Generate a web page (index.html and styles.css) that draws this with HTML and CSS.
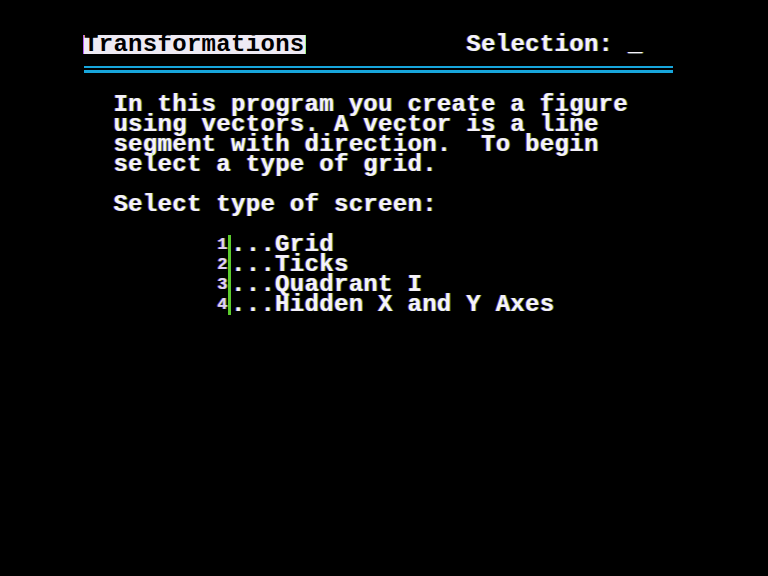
FILE: index.html
```html
<!DOCTYPE html>
<html>
<head>
<meta charset="utf-8">
<link rel="stylesheet" href="styles.css">
</head>
<body>
<div class="screen">
  <div class="row"><span class="inverse">Transformations</span>           Selection: _</div>
  <div class="rule"></div>
  <div class="row">  In this program you create a figure</div>
  <div class="row">  using vectors. A vector is a line</div>
  <div class="row">  segment with direction.  To begin</div>
  <div class="row">  select a type of grid.</div>
  <div class="row"> </div>
  <div class="row">  Select type of screen:</div>
  <div class="row"> </div>
  <div class="row">         <span class="key">1</span>...Grid</div>
  <div class="row">         <span class="key">2</span>...Ticks</div>
  <div class="row">         <span class="key">3</span>...Quadrant I</div>
  <div class="row">         <span class="key">4</span>...Hidden X and Y Axes</div>
</div>
</body>
</html>
```
FILE: styles.css
```css
html, body {
  margin: 0;
  padding: 0;
  background: #000;
  width: 768px;
  height: 576px;
  overflow: hidden;
}
.screen {
  margin-left: 84px;
  padding-top: 35px;
  width: 590px;
  font-family: "Liberation Mono", "DejaVu Sans Mono", monospace;
  font-weight: bold;
  font-size: 24px;
  letter-spacing: 0.3px;
  color: #f6f2fa;
  text-shadow: 1px 0 rgba(110, 240, 70, 0.55), -1px 0 rgba(190, 80, 255, 0.55);
}
.row {
  height: 20px;
  line-height: 20px;
  white-space: pre;
}
.inverse {
  display: inline-block;
  height: 19px;
  line-height: 20px;
  background: #eeeaf4;
  color: #000;
  text-shadow: none;
  box-shadow: -1px 0 0 #b060ff, 1px 0 0 #a0f080;
}
.rule {
  margin: 11px 0 22px;
  height: 2px;
  border-top: 2px solid #17a6dc;
  border-bottom: 3px solid #17a6dc;
  width: 589px;
}
.key {
  display: inline-block;
  box-sizing: border-box;
  width: 14.7px;
  height: 20px;
  vertical-align: top;
  font-size: 17px;
  line-height: 20px;
  letter-spacing: 0;
  padding-left: 1px;
  border-right: 3px solid #5ccc2e;
  color: #e0d0f4;
}
```
